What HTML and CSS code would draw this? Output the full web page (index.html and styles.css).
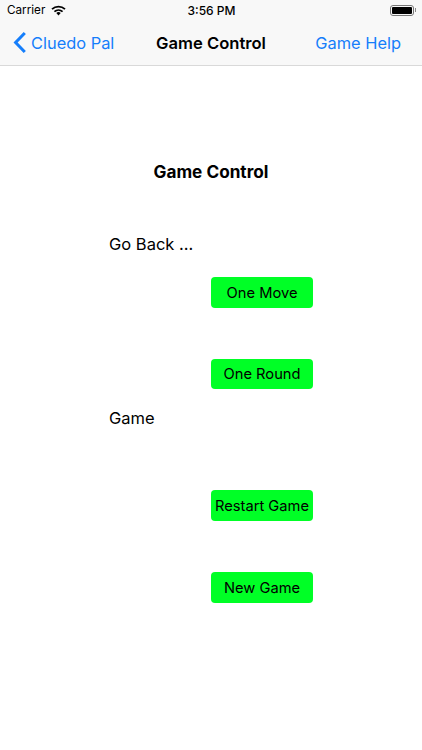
FILE: index.html
```html
<!DOCTYPE html>
<html lang="en">
<head>
    <meta charset="UTF-8">
    <title>Game Control</title>
    <link rel="stylesheet" href="styles.css">
</head>
<body>
    <div class="top-bar">
        <div class="status-bar">
            <div class="status-left">
                <span>Carrier</span>
                <svg class="wifi" width="15" height="11" viewBox="0 0 15 11">
                    <path d="M7.5 10.6 L5.3 8 A3.4 3.4 0 0 1 9.7 8 Z" fill="#000"/>
                    <path d="M1 4.2 A9.6 9.6 0 0 1 14 4.2" fill="none" stroke="#000" stroke-width="1.8"/>
                    <path d="M3.4 6.6 A6.2 6.2 0 0 1 11.6 6.6" fill="none" stroke="#000" stroke-width="1.8"/>
                </svg>
            </div>
            <div class="status-time">3:56 PM</div>
            <div class="status-right">
                <div class="battery"><div class="battery-fill"></div></div>
                <div class="battery-cap"></div>
            </div>
        </div>
        <div class="nav-bar">
            <a href="#" class="nav-back">
                <svg width="14" height="23" viewBox="0 0 14 23">
                    <path d="M11.8 2 L2.6 11.5 L11.8 21" fill="none" stroke="#157efb" stroke-width="3"/>
                </svg>
                Cluedo Pal
            </a>
            <div class="nav-title">Game Control</div>
            <a href="#" class="nav-help">Game Help</a>
        </div>
    </div>

    <div class="content">
        <h2>Game Control</h2>

        <div class="section-label first">Go Back ...</div>
        <button class="green-button move-button">One Move</button>
        <button class="green-button round-button">One Round</button>

        <div class="section-label game">Game</div>
        <button class="green-button restart-button">Restart Game</button>
        <button class="green-button new-button">New Game</button>
    </div>
</body>
</html>
```

FILE: styles.css
```css
body {
    margin: 0;
    font-family: "Inter", "Liberation Sans", sans-serif;
    background-color: #fff;
    color: #000;
}

.top-bar {
    background-color: #f8f8f8;
    border-bottom: 1px solid #d9d9d9;
    height: 65px;
}

.status-bar {
    height: 20px;
    padding: 0 6px 0 7px;
    display: flex;
    align-items: center;
    font-size: 11.7px;
}

.status-left {
    flex: 1;
    display: flex;
    align-items: center;
    gap: 6px;
}

.status-time {
    font-weight: 500;
    font-size: 12px;
}

.status-right {
    flex: 1;
    display: flex;
    align-items: center;
    justify-content: flex-end;
}

.battery {
    width: 20px;
    height: 7px;
    border: 1px solid #777;
    border-radius: 3px;
    padding: 1px;
}

.battery-fill {
    height: 100%;
    background-color: #000;
    border-radius: 1px;
}

.battery-cap {
    width: 1px;
    height: 4px;
    background-color: #888;
    margin-left: 1px;
}

.nav-bar {
    height: 45px;
    display: flex;
    align-items: center;
    padding: 0 21px 0 13px;
    font-size: 16.4px;
}

.nav-back, .nav-help {
    flex: 1;
    color: #157efb;
    text-decoration: none;
    display: flex;
    align-items: center;
    gap: 4px;
}

.nav-help {
    justify-content: flex-end;
}

.nav-title {
    font-weight: 600;
    font-size: 16.6px;
    margin-left: 8px;
}

.content {
    display: flex;
    flex-direction: column;
    align-items: flex-start;
    padding-left: 109px;
}

h2 {
    margin: 95px 0 0;
    width: 204px;
    text-align: center;
    font-size: 17.2px;
    font-weight: 700;
    line-height: 22px;
}

.section-label {
    font-size: 16.5px;
    line-height: 22px;
}

.section-label.first {
    margin-top: 50px;
}

.section-label.game {
    margin-top: 18px;
}

.green-button {
    width: 102px;
    height: 30.5px;
    margin-left: 102px;
    padding: 1px 0 0;
    border: none;
    border-radius: 4px;
    background-color: #00ff26;
    color: #000;
    font-family: inherit;
    font-size: 14.7px;
}

.move-button {
    margin-top: 22px;
}

.round-button {
    margin-top: 51px;
}

.restart-button {
    margin-top: 61px;
}

.new-button {
    margin-top: 51.5px;
}
```
